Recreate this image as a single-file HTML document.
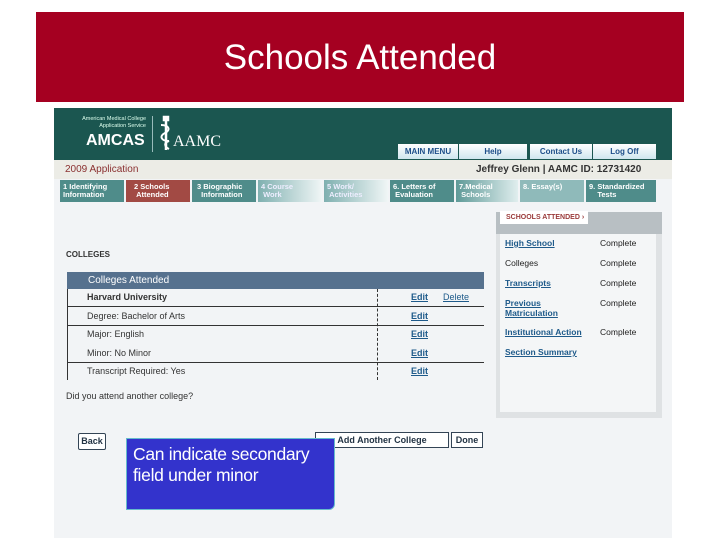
<!DOCTYPE html><html><head><style>
body{margin:0;width:720px;height:540px;background:#fff;position:relative;overflow:hidden;font-family:"Liberation Sans",sans-serif}
.a{position:absolute}
.t{position:absolute;top:180px;height:22px;font-size:7.5px;font-weight:bold;color:#fff;line-height:8px;padding:3px 0 0 3px;box-sizing:border-box;white-space:nowrap;overflow:hidden}
.btn{position:absolute;top:144px;height:15px;background:linear-gradient(#fff,#cfe6ee);color:#1e4f8a;font-size:8px;font-weight:bold;text-align:center;line-height:15px}
.r{position:absolute;left:67px;width:417px;font-size:9px;color:#333}
.e{position:absolute;font-size:9px;color:#1e5a8a;text-decoration:underline;font-weight:bold}
.s{position:absolute;font-size:8.5px;color:#222}
.l{color:#1e5a8a;text-decoration:underline;font-weight:bold}
</style></head><body>
<div class="a" style="left:36px;top:12px;width:648px;height:90px;background:#a50021"></div>
<div class="a" style="left:36px;top:38px;width:648px;text-align:center;color:#fff;font-size:35px">Schools Attended</div>
<div class="a" style="left:54px;top:108px;width:618px;height:430px;background:#f2f4f6"></div>
<div class="a" style="left:54px;top:108px;width:618px;height:52px;background:#1b5650"></div>
<div class="a" style="left:60px;top:116px;width:86px;text-align:right;color:#dfe;font-size:5.5px;line-height:7px">American Medical College<br>Application Service</div>
<div class="a" style="left:86px;top:132px;color:#fff;font-size:16px;font-weight:bold">AMCAS</div>
<div class="a" style="left:152px;top:116px;width:1px;height:36px;background:#9bb"></div>
<svg class="a" style="left:158px;top:115px" width="16" height="36" viewBox="0 0 16 36"><path d="M6 2h4v3H6z M8 5v30" stroke="#fff" stroke-width="2.5" fill="#fff"/><path d="M3 10c8 0 10 5 4 8s-4 8 4 8c-6 2-4 6 0 8" stroke="#fff" stroke-width="2" fill="none"/></svg>
<div class="a" style="left:173px;top:133px;color:#fff;font-size:16px;font-family:'Liberation Serif',serif">AAMC</div>
<div class="btn" style="left:398px;width:60px">MAIN MENU</div>
<div class="btn" style="left:459px;width:68px">Help</div>
<div class="btn" style="left:530px;width:62px">Contact Us</div>
<div class="btn" style="left:593px;width:63px">Log Off</div>
<div class="a" style="left:54px;top:160px;width:618px;height:19px;background:#ecece6"></div>
<div class="a" style="left:65px;top:164px;font-size:10px;color:#8a3030">2009 Application</div>
<div class="a" style="left:476px;top:164px;font-size:10px;color:#333;font-weight:bold">Jeffrey Glenn | AAMC ID: 12731420</div>
<div class="t" style="left:60px;width:64px;background:#4f8c8a">1 Identifying<br>Information</div>
<div class="t" style="left:126px;width:64px;background:#a24a44;padding-left:8px">2 Schools<br>&nbsp;Attended</div>
<div class="t" style="left:192px;width:64px;background:#4f8c8a;padding-left:5px">3 Biographic<br>&nbsp;&nbsp;Information</div>
<div class="t" style="left:258px;width:64px;background:linear-gradient(90deg,#7fb0b0,#f0f6f6);color:#eef">4 Course<br>&nbsp;Work</div>
<div class="t" style="left:324px;width:64px;background:linear-gradient(90deg,#7fb0b0,#f0f6f6);color:#eef">5 Work/<br>&nbsp;Activities</div>
<div class="t" style="left:390px;width:64px;background:#4f8c8a">6. Letters of<br>&nbsp;Evaluation</div>
<div class="t" style="left:456px;width:62px;background:linear-gradient(90deg,#5f9a98,#e0eeee)">7.Medical<br>&nbsp;Schools</div>
<div class="t" style="left:520px;width:64px;background:#8fbaba">8. Essay(s)</div>
<div class="t" style="left:586px;width:70px;background:#4f8c8a">9. Standardized<br>&nbsp;&nbsp;&nbsp;&nbsp;Tests</div>
<div class="a" style="left:496px;top:212px;width:166px;height:206px;background:#dfe2e4"></div>
<div class="a" style="left:496px;top:212px;width:166px;height:22px;background:#b8bfc3"></div>
<div class="a" style="left:500px;top:211px;width:88px;height:13px;background:#fff;color:#9a3a3a;font-size:7px;font-weight:bold;line-height:13px;padding-left:6px;box-sizing:border-box;white-space:nowrap">SCHOOLS ATTENDED ›</div>
<div class="a" style="left:500px;top:234px;width:156px;height:178px;background:#f4f6f7"></div>
<div class="s l" style="left:505px;top:238px">High School</div><div class="s" style="left:600px;top:238px">Complete</div>
<div class="s" style="left:505px;top:258px">Colleges</div><div class="s" style="left:600px;top:258px">Complete</div>
<div class="s l" style="left:505px;top:278px">Transcripts</div><div class="s" style="left:600px;top:278px">Complete</div>
<div class="s l" style="left:505px;top:298px;line-height:10px">Previous<br>Matriculation</div><div class="s" style="left:600px;top:298px">Complete</div>
<div class="s l" style="left:505px;top:327px">Institutional Action</div><div class="s" style="left:600px;top:327px">Complete</div>
<div class="s l" style="left:505px;top:347px">Section Summary</div>
<div class="a" style="left:66px;top:250px;font-size:8px;font-weight:bold;color:#333">COLLEGES</div>
<div class="a" style="left:67px;top:272px;width:417px;height:17px;background:#56718e;color:#fff;font-size:10px;line-height:17px;padding-left:21px;box-sizing:border-box">Colleges Attended</div>
<div class="a" style="left:67px;top:289px;width:1px;height:91px;background:#333"></div>
<div class="a" style="left:377px;top:289px;width:0;height:91px;border-left:1px dashed #333"></div>
<div class="a" style="left:67px;top:306px;width:417px;height:1px;background:#333"></div>
<div class="a" style="left:67px;top:325px;width:417px;height:1px;background:#333"></div>
<div class="a" style="left:67px;top:362px;width:417px;height:1px;background:#333"></div>
<div class="r" style="top:292px;padding-left:20px;font-weight:bold">Harvard University</div>
<div class="r" style="top:311px;padding-left:20px">Degree: Bachelor of Arts</div>
<div class="r" style="top:329px;padding-left:20px">Major: English</div>
<div class="r" style="top:348px;padding-left:20px">Minor: No Minor</div>
<div class="r" style="top:366px;padding-left:20px">Transcript Required: Yes</div>
<div class="e" style="left:411px;top:292px">Edit</div><div class="e" style="left:443px;top:292px;font-weight:normal">Delete</div>
<div class="e" style="left:411px;top:311px">Edit</div>
<div class="e" style="left:411px;top:329px">Edit</div>
<div class="e" style="left:411px;top:348px">Edit</div>
<div class="e" style="left:411px;top:366px">Edit</div>
<div class="a" style="left:66px;top:391px;font-size:9px;color:#333">Did you attend another college?</div>
<div class="a" style="left:78px;top:433px;width:26px;height:15px;border:1px solid #345;border-radius:2px;background:#fff;font-size:9px;font-weight:bold;color:#234;text-align:center;line-height:15px">Back</div>
<div class="a" style="left:315px;top:432px;width:132px;height:14px;border:1px solid #345;background:#fff;font-size:9px;font-weight:bold;color:#234;text-align:center;line-height:14px">Add Another College</div>
<div class="a" style="left:451px;top:432px;width:30px;height:14px;border:1px solid #345;background:#fff;font-size:9px;font-weight:bold;color:#234;text-align:center;line-height:14px">Done</div>
<div class="a" style="left:126px;top:438px;width:209px;height:72px;background:#3333cc;border:1px solid #6bc;border-radius:0 0 6px 0;color:#fff;font-size:17.5px;line-height:21px;padding:5px 0 0 6px;box-sizing:border-box;letter-spacing:-0.3px;white-space:nowrap">Can indicate secondary<br>field under minor</div>
</body></html>
